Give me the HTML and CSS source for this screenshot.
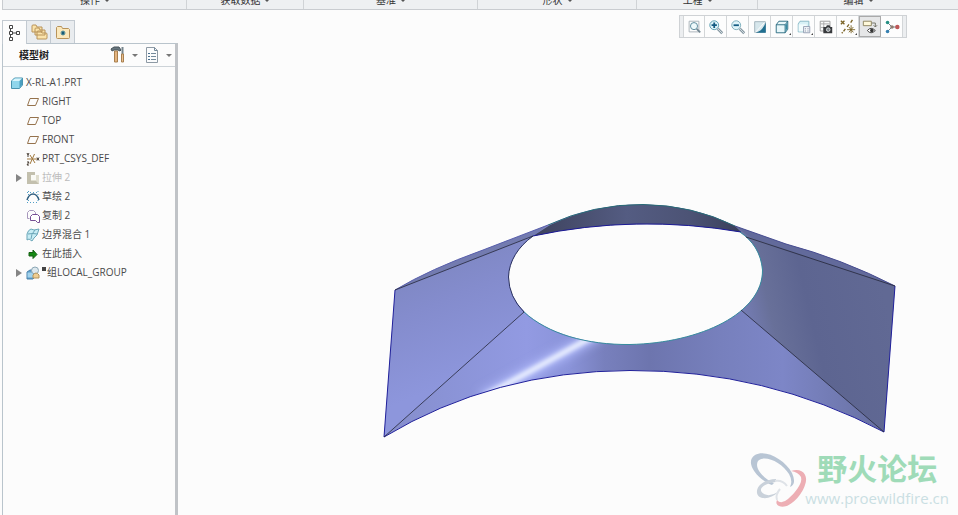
FILE: index.html
```html
<!DOCTYPE html>
<html lang="zh-CN">
<head>
<meta charset="utf-8">
<title>X-RL-A1.PRT</title>
<link rel="stylesheet" href="styles.css">
</head>
<body>
<header class="ribbon">
  <button class="group g-ops">操作<i class="caret"></i></button>
  <button class="group g-data">获取数据<i class="caret"></i></button>
  <button class="group g-datum">基准<i class="caret"></i></button>
  <button class="group g-shape">形状<i class="caret"></i></button>
  <button class="group g-eng">工程<i class="caret"></i></button>
  <button class="group g-edit">编辑<i class="caret"></i></button>
</header>
<div class="workspace">
  <aside class="sidebar">
    <nav class="tabs">
      <button class="tab active" aria-label="模型树">
        <svg width="16" height="18" viewBox="0 0 16 18" fill="none" stroke="#444"><path d="M3.500 5v8M3 9h7"/><path fill="#fff" d="M2.500 1.500h3v3h-3zM2.500 7.500h3v3h-3zM2.500 13.500h3v3h-3zM9.500 7.500h3v3h-3z"/></svg>
      </button>
      <button class="tab" aria-label="文件夹浏览器">
        <svg width="18" height="18" viewBox="0 0 18 18" fill="#fae3ab" stroke="#b8935a"><path d="M2 9V3q0-1 1-1h3l1 2h5v5zM5 12V6q0-1 1-1h3l1 2h5v5zM7 16V9q0-1 1-1h3l1 2h4q1 0 1 1v4q0 1-1 1z"/></svg>
      </button>
      <button class="tab" aria-label="收藏夹">
        <svg width="18" height="18" viewBox="0 0 18 18"><path d="M2.500 14.500v-10l1-1h4l1 2h6l1 1v8q0 1-1 1h-11q-1 0-1-1z" fill="#fbe8bb" stroke="#b8935a"/><path d="M9 7.500v5M6.500 10h5M7.500 8l3 4M10.500 8l-3 4" stroke="#287991"/><circle cx="9" cy="10" r="1.500" fill="#155b77"/></svg>
      </button>
    </nav>
    <section class="panel">
      <div class="panel-head">
        <h1>模型树</h1>
        <button class="tool" aria-label="设置">
          <svg width="16" height="18" viewBox="0 0 16 18"><path d="M1 3l3-2h5l2 3-1 1-2-1H4L2 5z" fill="#68767e" stroke="#46535a"/><path d="M4.500 5h3v11h-3z" fill="#e4b480" stroke="#a9804e"/><path d="M12.500 1v7" stroke="#77858c" stroke-width="2"/><path d="M11.500 8h2v8h-2z" fill="#e8c094" stroke="#a9804e"/></svg>
          <i class="caret wide"></i>
        </button>
        <button class="tool" aria-label="显示">
          <svg width="16" height="18" viewBox="0 0 16 18"><path d="M2.500 1.500h8l3 3v12h-11z" fill="#fbfcfd" stroke="#8e9aa5"/><path d="M10.500 1.500v3h3M7 7.500h5M7 10.500h5M7 13.500h5" fill="none" stroke="#748a9b"/><path d="M4 7.500h2M4 10.500h2M4 13.500h2" stroke="#496f8d"/></svg>
          <i class="caret wide"></i>
        </button>
      </div>
      <ul class="tree">
        <li class="root"><svg class="ico" viewBox="0 0 14 14"><path d="M1.500 5l3-3h8v7l-3 3.500h-8z" fill="#8fd6ec" stroke="#4a94b0"/><path d="M2 5l3-2.500h7L9.500 5z" fill="#d8f5fc"/><path d="M9.500 5l2.500-2.500V9l-2.500 3z" fill="#4b9fc0"/></svg>X-RL-A1.PRT</li>
        <li><i class="twist"></i><svg class="ico" viewBox="0 0 14 14"><path d="M4 3.500h8.500l-3 7H1.500z" fill="none" stroke="#95724c"/></svg>RIGHT</li>
        <li><i class="twist"></i><svg class="ico" viewBox="0 0 14 14"><path d="M4 3.500h8.500l-3 7H1.500z" fill="none" stroke="#95724c"/></svg>TOP</li>
        <li><i class="twist"></i><svg class="ico" viewBox="0 0 14 14"><path d="M4 3.500h8.500l-3 7H1.500z" fill="none" stroke="#95724c"/></svg>FRONT</li>
        <li><i class="twist"></i><svg class="ico" viewBox="0 0 14 14" fill="none" stroke="#a1793e"><path d="M1 7h10M4 3l5 8M8.500 2L4 12"/><path d="M1 1l1 2 1-2M2 3v2M1 10h2l-2 3h2M11 5.500l2 3M13 5.500l-2 3" stroke="#443a30"/></svg>PRT_CSYS_DEF</li>
        <li class="muted"><i class="twist open"></i><svg class="ico" viewBox="0 0 14 14"><path d="M1 1h8v3h4v9H1z" fill="#c3c0ae"/><path d="M5 4h8v9l-3-3H5z" fill="#e0decf"/><path d="M5 4h5v5H5z" fill="#fafaf5"/></svg>拉伸 2</li>
        <li><i class="twist"></i><svg class="ico" viewBox="0 0 14 14" fill="none"><path d="M1 2.500h12M1 12.500h12M2.500 1v12M12 1v12" stroke="#519fc6" stroke-dasharray="1 2"/><path d="M1 10Q3 4 7 4t6 6" stroke="#315f80" stroke-width="1.500"/></svg>草绘 2</li>
        <li><i class="twist"></i><svg class="ico" viewBox="0 0 14 14" fill="none"><path d="M3.500 9.500h-2v-6l2-2h4l2 2v2" stroke="#a898bd"/><path d="M4.500 11.500v-4l2-2h5l2 2v6h-2l-2-2z" fill="#fff" stroke="#764f94"/></svg>复制 2</li>
        <li><i class="twist"></i><svg class="ico" viewBox="0 0 14 14"><path d="M1 6q1-4 4-5l3 1 5-1-2 6-3 3-2 3-3-2-2 1z" fill="#c8edf5" stroke="#6ba6b8"/><path d="M5 11q0-5 4-9M2 6q5-1 9 0" fill="none" stroke="#6ba6b8"/></svg>边界混合 1</li>
        <li><i class="twist"></i><svg class="ico" viewBox="0 0 14 14"><path d="M3 5.500h4V3l4 4.500-4 4V9H3z" fill="#168a14" stroke="#155f13"/></svg>在此插入</li>
        <li><i class="twist open"></i><svg class="ico" viewBox="0 0 14 14"><path d="M1 6l3-2h5v7l-2 2H1z" fill="#5f9fcb" stroke="#4c83ab"/><path d="M1.500 6.500H7v5H1.500z" fill="#a3d3ec"/><circle cx="9" cy="4.500" r="3.500" fill="#dce8ee" stroke="#8ba6b4"/><path d="M7 12V9q3-4 6 0v3z" fill="#efcd91" stroke="#b3945c"/></svg><i class="mark"></i>组LOCAL_GROUP</li>
      </ul>
    </section>
  </aside>
  <main class="viewport">
    <svg class="model" viewBox="178 10 780 505" role="img" aria-label="边界混合曲面">
      <defs>
        <linearGradient id="skin" gradientUnits="userSpaceOnUse" x1="384" y1="0" x2="895" y2="0">
          <stop offset="0" stop-color="#858dca"/><stop offset=".12" stop-color="#8a93d6"/><stop offset=".28" stop-color="#929ae2"/><stop offset=".36" stop-color="#8b94da"/><stop offset=".43" stop-color="#7880bd"/><stop offset=".52" stop-color="#6d75ae"/><stop offset=".66" stop-color="#7780bd"/><stop offset=".78" stop-color="#7d86c7"/><stop offset=".9" stop-color="#7079b0"/><stop offset="1" stop-color="#626a9a"/>
        </linearGradient>
        <linearGradient id="wing" gradientUnits="userSpaceOnUse" x1="735" y1="330" x2="885" y2="295">
          <stop offset="0" stop-color="#7a82c0"/><stop offset=".25" stop-color="#687099"/><stop offset=".5" stop-color="#5d6591"/><stop offset="1" stop-color="#616994"/>
        </linearGradient>
        <linearGradient id="leftwing" gradientUnits="userSpaceOnUse" x1="430" y1="250" x2="480" y2="370">
          <stop offset="0" stop-color="#7d86c0"/><stop offset=".4" stop-color="#848ccd"/><stop offset="1" stop-color="#8d96dc"/>
        </linearGradient>
        <linearGradient id="arch" gradientUnits="userSpaceOnUse" x1="533" y1="0" x2="742" y2="0">
          <stop offset="0" stop-color="#3d425d"/><stop offset=".45" stop-color="#545c82"/><stop offset=".75" stop-color="#4c5375"/><stop offset="1" stop-color="#393e5a"/>
        </linearGradient>
        <filter id="soft" x="-30%" y="-60%" width="160%" height="220%"><feGaussianBlur stdDeviation="5"/></filter>
        <filter id="glow" x="-30%" y="-60%" width="160%" height="220%"><feGaussianBlur stdDeviation="2"/></filter>
        <clipPath id="surface">
          <path clip-rule="evenodd" d="M395 290Q430 269 483 250L548 225Q592 204 643 204.500T735 226L786 244Q842 259 895 286L884 432Q766 370 630 370.500T384 437ZM533 236C518 247 509 261 508.500 277C509 319 567 345 630 344.500C701 343 763 313 762.500 270C761 253 753 241 740 232Q636 214 533 236Z"/>
        </clipPath>
      </defs>
      <g clip-path="url(#surface)">
        <path d="M380 200h520v240H380z" fill="url(#skin)"/>
        <path d="M384 437L395 290Q430 269 483 250L548 225 560 260 524 312Z" fill="url(#leftwing)"/>
        <path d="M884 432L741 310 720 270 740 232 735 226 786 244Q842 259 895 286Z" fill="url(#wing)"/>
        <path d="M395 290Q430 269 483 250L548 225 533 236Z" fill="#737bb0"/>
        <path d="M895 286Q842 259 786 244L735 226 752 238Z" fill="#626a9b"/>
        <path d="M482 398L600 333" stroke="#b0bafa" stroke-width="12" filter="url(#soft)"/>
        <path d="M485 396L592 337" stroke="#eef3ff" stroke-width="5" filter="url(#glow)"/>
      </g>
      <path d="M533 236L550 225Q594 204 643 204.500T735 226L741 232Q636 214 533 236Z" fill="url(#arch)"/>
      <g fill="none" stroke-width="1">
        <path d="M395 290Q430 269 483 250L548 225" stroke="#5a60ac"/>
        <path d="M735 226L786 244Q842 259 895 286" stroke="#4a4f92"/>
        <path d="M395 290L384 437M895 286L884 432M384 437Q494 371 630 370.500T884 432" stroke="#21219b"/>
        <path d="M533 236Q636 214 741 232" stroke="#1b1995"/>
        <path d="M548 225Q594 204 643 204.500T735 226" stroke="#286b76"/>
        <path d="M533 236C518 247 509 261 508.500 277Q509 297 524 312" stroke="#29305e"/>
        <path d="M524 312C548 334 587 345 630 344.500C701 343 763 313 762.500 270C761 253 753 241 740 232" stroke="#378b9e"/>
      </g>
      <path d="M395 290L533 236M384 437L524 312M884 432L741 310M895 286L746 237" fill="none" stroke="#25283b" stroke-opacity=".8"/>
    </svg>
    <div class="viewbar" role="toolbar">
      <button aria-label="重新调整"><svg viewBox="0 0 18 18" fill="none"><path d="M3.500 2.500h11v12h-11z" stroke="#a5afb6"/><circle cx="9" cy="8" r="4" fill="#eef9fb" stroke="#4f8295"/><path d="M12 11l4 4" stroke="#748792" stroke-width="2"/></svg></button>
      <button aria-label="放大"><svg viewBox="0 0 18 18" fill="none"><path d="M11 11l5 5" stroke="#8798a2" stroke-width="3"/><path d="M11 11l5 5" stroke="#dae3e7"/><circle cx="7" cy="7" r="5" fill="#dff4f9" stroke="#5299ad"/><path d="M4 7h6M7 4v6" stroke="#135b82" stroke-width="2"/></svg></button>
      <button aria-label="缩小"><svg viewBox="0 0 18 18" fill="none"><path d="M11 11l5 5" stroke="#8798a2" stroke-width="3"/><path d="M11 11l5 5" stroke="#dae3e7"/><circle cx="7" cy="7" r="5" fill="#dff4f9" stroke="#75a9b8"/><path d="M4 7h6" stroke="#135b82" stroke-width="2"/></svg></button>
      <button aria-label="重画"><svg viewBox="0 0 18 18"><path d="M3 3h12v12H3z" fill="#d7e7ec" stroke="#9eb0b9"/><path d="M15.500 4v11.500H4Q12 13 15.500 4z" fill="#216f90"/><path d="M4 15L14 4" stroke="#fff"/></svg></button>
      <button class="more" aria-label="显示样式"><svg viewBox="0 0 18 18" fill="#e8f7fa" stroke="#22657c"><path d="M2.500 6.500l3-4h10v9l-3 4h-10z"/><path d="M2.500 6.500h10v9M12.500 6.500l3-4" fill="none"/><path d="M13 7l2-3v7l-2 3z" fill="#388ba3" stroke="none"/></svg></button>
      <button class="more" aria-label="已保存方向"><svg viewBox="0 0 18 18"><path d="M2.500 5.500l2-3h10v9l-2 3h-10z" fill="#d8f1f6" stroke="#82b4c2"/><path d="M3 6h9v8H3z" fill="#f2fcfd"/><path d="M8.500 8.500h7v7h-7z" fill="#f2f4f8" stroke="#8f9bb0"/><path d="M10 11h1M13 11h1M10 13.500h1M13 13.500h1" stroke="#61738d"/></svg></button>
      <button aria-label="视图管理器"><svg viewBox="0 0 18 18"><path d="M2.500 2.500h11v11h-11z" fill="#fafafa" stroke="#979797"/><path d="M3 5.500h10M3 9.500h10M6.500 3v10" stroke="#a5a5a5"/><path d="M6 9h3l1-2h3l1 2h2v7H6z" fill="#383a3d"/><circle cx="11.500" cy="12" r="2" fill="#7d8489" stroke="#e3e6e8"/></svg></button>
      <button class="more" aria-label="基准显示"><svg viewBox="0 0 18 18" fill="none" stroke="#7a6325"><path d="M1 2l4 4M5 2L1 6M14 1l-2 3M10 6l-2 3M6 11l-2 3M2 16l1-1" stroke-width="1.500"/><path d="M12.500 7v9M8 12h9M10 9l5 6M15 9l-5 6"/></svg></button>
      <button class="on" aria-label="注释显示"><svg viewBox="0 0 18 18"><path d="M1.500 2.500h9v5h-9z" fill="#fff9da" stroke="#897e58"/><path d="M11 4.500h4V9M13 7l2 2 2-2" fill="none" stroke="#6c6c60"/><path d="M6 13q4-5 9 0-5 5-9 0z" fill="#fff" stroke="#333"/><circle cx="11" cy="13" r="2" fill="#333"/></svg></button>
      <button aria-label="旋转中心"><svg viewBox="0 0 18 18"><path d="M4 4l5 5M9 9h5M9 9l-5 5" stroke="#657077"/><circle cx="4" cy="4" r="2" fill="#258f83"/><circle cx="15" cy="9" r="2.500" fill="#be5757"/><circle cx="4" cy="14" r="2" fill="#3680b1"/><circle cx="9" cy="9" r="2" fill="#8d7b70"/></svg></button>
    </div>
    <div class="watermark">
      <svg class="logo" width="60" height="60" viewBox="0 0 60 60" fill="none">
        <path fill-rule="evenodd" fill="#b8c5d4" d="M6 5C17-1 36 10 43 23Q48 34 41 37 44 31 40 24C33 12 15 4 9 11 5 18 14 28 25 33L23 35C8 29-5 12 6 5Z"/>
        <path fill="#edaeb4" d="M42 21C53 17 60 25 56 35 52 47 39 60 30 56Q26 54 28 50 32 55 39 49C46 43 54 33 52 27Q49 22 42 21Z"/>
        <path fill="#c9d1da" d="M27 29C17 29 7 35 8 43 9 50 22 50 29 42Q21 47 15 44C7 39 16 33 27 32Z"/>
        <path d="M26 31q8-1 12 5M28 50q-2-5 3-11" stroke="#dfe3e8" stroke-width="2"/>
      </svg>
      <div class="brand"><strong>野火论坛</strong><a href="#">www.proewildfire.cn</a></div>
    </div>
  </main>
</div>
</body>
</html>
```
FILE: styles.css
```css
* { box-sizing: border-box; }

body {
  margin: 0;
  height: 100vh;
  display: flex;
  flex-direction: column;
  overflow: hidden;
  background: #fcfcfc;
  color: #4a4a4a;
  font: 10px/19px "Open Sans", "Noto Sans CJK SC", sans-serif;
}

button {
  margin: 0;
  padding: 0;
  border: 0;
  background: none;
  color: inherit;
  font: inherit;
}

svg { display: block; }

.ribbon {
  flex: none;
  display: flex;
  height: 10px;
  margin-left: 2px;
  overflow: hidden;
  background: #eef0f2;
  border-left: 1px solid #c9ccd0;
  border-bottom: 1px solid #c9ccd0;
}

.group {
  display: flex;
  align-items: center;
  justify-content: center;
  gap: 5px;
  height: 19px;
  margin-top: -9px;
  border-right: 1px solid #d0d3d6;
  color: #333;
}

.group:last-child { border-right: 0; }
.g-ops { flex: 184; }
.g-data { flex: 117; }
.g-datum { flex: 174; }
.g-shape { flex: 159; }
.g-eng { flex: 121; }
.g-edit { flex: 201; }

.caret {
  border: 2px solid transparent;
  border-top-color: #555;
  border-bottom: 0;
}

.caret.wide {
  border-width: 3px 3px 0;
  border-top-color: #777;
}

.workspace {
  flex: 1;
  display: flex;
  min-height: 0;
}

.sidebar {
  flex: none;
  width: 178px;
  padding: 10px 0 0 2px;
  display: flex;
  flex-direction: column;
}

.tabs {
  display: flex;
  height: 23px;
}

.tab {
  display: flex;
  align-items: center;
  justify-content: center;
  width: 24px;
  border: 1px solid #c3cad1;
  border-left: 0;
  border-bottom: 0;
  background: #e9ecef;
}

.tab.active {
  width: 25px;
  height: 24px;
  border-left: 1px solid #c3cad1;
  background: #fcfcfc;
  z-index: 1;
}

.panel {
  flex: 1;
  border: 1px solid #b9c4cc;
  border-right: 3px solid #c0c3c7;
  border-bottom: 0;
}

.panel-head {
  display: flex;
  align-items: center;
  gap: 6px;
  height: 23px;
  padding: 0 3px 0 16px;
  border-bottom: 1px solid #cdd3d8;
}

.panel-head h1 {
  flex: 1;
  margin: 0;
  color: #222;
  font-size: 10px;
  font-weight: 700;
}

.tool {
  display: flex;
  align-items: center;
  gap: 6px;
}

.tree {
  margin: 0;
  padding: 6px 0 0 11px;
  list-style: none;
}

.tree li {
  display: flex;
  align-items: center;
  height: 19px;
  white-space: nowrap;
}

.tree .muted { color: #bbb; }
.tree .root { margin-left: -4px; }

.ico {
  flex: none;
  width: 14px;
  height: 14px;
  margin-right: 2px;
}

.twist {
  flex: none;
  width: 12px;
  height: 8px;
}

.twist.open::before {
  content: "";
  display: block;
  width: 0;
  margin-left: 2px;
  border: 4px solid transparent;
  border-left: 6px solid #858585;
  border-right: 0;
}

.mark {
  align-self: flex-start;
  width: 4px;
  height: 4px;
  margin: 4px 1px 0 0;
  background: #444;
}

.viewport {
  flex: 1;
  position: relative;
  min-width: 0;
}

.model {
  width: 100%;
  height: 100%;
}

.viewbar {
  position: absolute;
  top: 5px;
  right: 51px;
  display: flex;
  height: 23px;
  padding: 0 3px;
  border: 1px solid #cfd2d5;
  background: #eceef0;
}

.viewbar button {
  position: relative;
  display: flex;
  align-items: center;
  justify-content: center;
  width: 22px;
  border-right: 1px solid #d3d6d8;
  background: #fdfdfd;
}

.viewbar button:first-child { border-left: 1px solid #d3d6d8; }

.viewbar svg {
  width: 16px;
  height: 16px;
}

.viewbar .on {
  border: 1px solid #aaa;
  background: #e6e7e8;
}

.viewbar .more::after {
  content: "";
  position: absolute;
  right: 1px;
  bottom: 2px;
  border: 1px solid #444;
  border-top-color: transparent;
  border-left-color: transparent;
}

.watermark {
  position: absolute;
  right: 9px;
  bottom: 5px;
  display: flex;
  align-items: flex-end;
}

.logo { margin-right: -4px; }

.brand {
  display: flex;
  flex-direction: column;
}

.brand strong {
  margin-left: 12px;
  color: #9fdbb8;
  font-size: 30px;
  line-height: 34px;
}

.brand a {
  color: #cadfe3;
  font-size: 15px;
  line-height: 24px;
  text-decoration: none;
}
```
